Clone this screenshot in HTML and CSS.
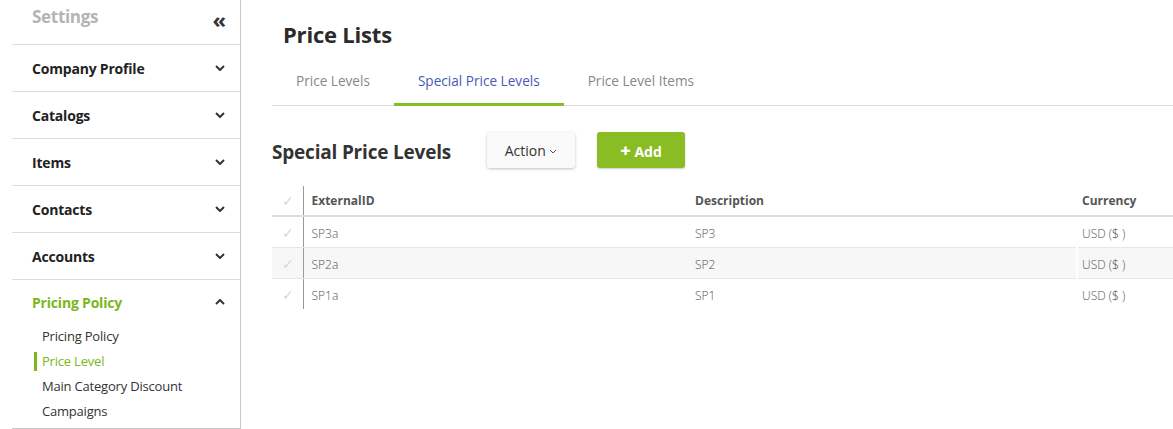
FILE: index.html
```html
<!DOCTYPE html>
<html>

<head>
    <title>Price Lists</title>
    <meta charset="utf-8">
    <meta name="viewport" content="width=device-width, initial-scale=1.0">
    <link rel="stylesheet" href="styles.css">
</head>

<body>

    <aside class="sidebar">
        <div class="side-head">
            <span class="side-title">Settings</span>
            <span class="collapse">&laquo;</span>
        </div>
        <div class="group">
            <span>Company Profile</span>
            <svg class="chev" viewBox="0 0 10 6"><path d="M1 1l4 4 4-4"/></svg>
        </div>
        <div class="group">
            <span>Catalogs</span>
            <svg class="chev" viewBox="0 0 10 6"><path d="M1 1l4 4 4-4"/></svg>
        </div>
        <div class="group">
            <span>Items</span>
            <svg class="chev" viewBox="0 0 10 6"><path d="M1 1l4 4 4-4"/></svg>
        </div>
        <div class="group">
            <span>Contacts</span>
            <svg class="chev" viewBox="0 0 10 6"><path d="M1 1l4 4 4-4"/></svg>
        </div>
        <div class="group">
            <span>Accounts</span>
            <svg class="chev" viewBox="0 0 10 6"><path d="M1 1l4 4 4-4"/></svg>
        </div>
        <div class="open-group">
            <div class="group open">
                <span>Pricing Policy</span>
                <svg class="chev" viewBox="0 0 10 6"><path d="M1 5l4-4 4 4"/></svg>
            </div>
            <ul class="sub">
                <li>Pricing Policy</li>
                <li class="aktiv">Price Level</li>
                <li>Main Category Discount</li>
                <li>Campaigns</li>
            </ul>
        </div>
    </aside>

    <main class="main">
        <h1>Price Lists</h1>
        <nav class="tabs">
            <a>Price Levels</a>
            <a class="valgt">Special Price Levels</a>
            <a>Price Level Items</a>
        </nav>

        <div class="toolbar">
            <h2>Special Price Levels</h2>
            <button class="btn action">Action <svg viewBox="0 0 8 5"><path d="M1 1l3 3 3-3"/></svg></button>
            <button class="btn add"><b>+</b> Add</button>
        </div>

        <table class="grid">
            <colgroup>
                <col class="c-check">
                <col class="c-ext">
                <col class="c-desc">
                <col class="c-cur">
            </colgroup>
            <thead>
                <tr>
                    <th class="check">&#10003;</th>
                    <th>ExternalID</th>
                    <th>Description</th>
                    <th>Currency</th>
                </tr>
            </thead>
            <tbody>
                <tr>
                    <td class="check">&#10003;</td>
                    <td>SP3a</td>
                    <td>SP3</td>
                    <td>USD (<span class="val">$</span> )</td>
                </tr>
                <tr>
                    <td class="check">&#10003;</td>
                    <td>SP2a</td>
                    <td>SP2</td>
                    <td>USD (<span class="val">$</span> )</td>
                </tr>
                <tr>
                    <td class="check">&#10003;</td>
                    <td>SP1a</td>
                    <td>SP1</td>
                    <td>USD (<span class="val">$</span> )</td>
                </tr>
            </tbody>
        </table>
    </main>

</body>

</html>
```

FILE: styles.css
```css
body {
    margin: 0;
    display: flex;
    height: 429px;
    overflow: hidden;
    font-family: "Open Sans", "Noto Sans", sans-serif;
    color: #222;
    background: #fff;
}

/* venstre menu */
.sidebar {
    flex: none;
    width: 229px;
    margin-left: 12px;
    border-right: 1px solid #c8c8c8;
    height: 429px;
    box-sizing: border-box;
}

.side-head {
    height: 45px;
    display: flex;
    align-items: flex-start;
    justify-content: space-between;
    padding: 5px 14px 0 20px;
    box-sizing: border-box;
    border-bottom: 1px solid #dcdcdc;
}

.side-title {
    font-size: 17px;
    font-weight: 700;
    color: #b4b4b4;
    letter-spacing: -0.3px;
}

.collapse {
    font-size: 22px;
    line-height: 22px;
    font-weight: 700;
    color: #333;
    margin-top: 3px;
}

.group {
    height: 46px;
    display: flex;
    align-items: center;
    justify-content: space-between;
    padding: 0 15px 0 20px;
    border-bottom: 1px solid #dcdcdc;
    font-size: 14px;
    font-weight: 700;
    letter-spacing: -0.2px;
}

.chev {
    width: 10px;
    height: 6px;
    fill: none;
    stroke: #333;
    stroke-width: 2;
}

.open-group {
    border-bottom: 1px solid #c8c8c8;
}

.group.open {
    border-bottom: none;
    height: 44px;
    color: #7db61c;
}

.sub {
    list-style: none;
    margin: 0;
    padding: 0 0 4px 0;
}

.sub li {
    height: 25px;
    line-height: 24px;
    font-size: 13px;
    padding-left: 30px;
    color: #333;
    letter-spacing: -0.2px;
}

.sub li.aktiv {
    color: #7db61c;
    margin: 3px 0 3px 22px;
    padding-left: 5px;
    border-left: 3px solid #7db61c;
    height: 19px;
    line-height: 18px;
}

/* indhold */
.main {
    flex: 1;
    padding-left: 31px;
    min-width: 0;
}

h1 {
    margin: 19px 0 0 11px;
    font-size: 22px;
    line-height: 30px;
    font-weight: 700;
    color: #2b2b2b;
    letter-spacing: -0.2px;
}

.tabs {
    display: flex;
    margin-top: 10px;
    border-bottom: 1px solid #dedede;
}

.tabs a {
    padding: 0 24px;
    height: 46px;
    line-height: 44px;
    font-size: 13.6px;
    color: #888;
    border-bottom: 3px solid transparent;
    box-sizing: border-box;
    margin-bottom: -1px;
}

.tabs a.valgt {
    color: #4b57b9;
    border-bottom-color: #86bc25;
    height: 47px;
}

.toolbar {
    display: flex;
    align-items: center;
    margin-top: 26px;
    height: 36px;
}

h2 {
    margin: 0 36px 0 0;
    font-size: 19px;
    font-weight: 700;
    color: #333;
    letter-spacing: -0.2px;
    position: relative;
    top: 2px;
}

.btn {
    height: 36px;
    width: 88px;
    border: none;
    border-radius: 3px;
    font-family: inherit;
    font-size: 14px;
}

.action {
    background: #fafafa;
    color: #333;
    box-shadow: 0 1px 3px rgba(0, 0, 0, 0.25);
    margin-right: 22px;
}

.action svg {
    width: 8px;
    height: 5px;
    fill: none;
    stroke: #555;
    stroke-width: 1;
    vertical-align: middle;
}

.add {
    background: #8abd24;
    color: #fff;
    font-weight: 700;
    box-shadow: 0 1px 2px rgba(0, 0, 0, 0.2);
}

.add b {
    font-size: 18px;
    font-weight: 800;
}

/* tabel */
.grid {
    margin-top: 18px;
    border-collapse: collapse;
    width: 930px;
    font-size: 12px;
}

.c-check { width: 31px; }
.c-ext { width: 384px; }
.c-desc { width: 390px; }

.grid th {
    height: 29px;
    text-align: left;
    font-weight: 700;
    color: #555;
    padding: 0 8px;
    border-bottom: 2px solid #dedede;
}

.grid td {
    height: 28px;
    padding: 2px 8px 0;
    color: #555;
    font-weight: 300;
    border-bottom: 1px solid #e6e6e6;
}

.grid td .val {
    font-family: "Noto Sans", sans-serif;
    color: #555;
}

.grid tbody tr:nth-child(2) td {
    background: #f7f7f7;
}

.grid tbody tr:last-child td {
    border-bottom: none;
}

.grid td:nth-child(4),
.grid th:nth-child(4) {
    border-left: 2px solid #fff;
    padding-left: 4px;
}

.grid .check {
    color: #d8d8d8;
    text-align: center;
    padding: 0 0 0 2px;
    font-size: 14px;
    font-weight: 400;
    border-right: 1px solid #9a9a9a;
}
```
